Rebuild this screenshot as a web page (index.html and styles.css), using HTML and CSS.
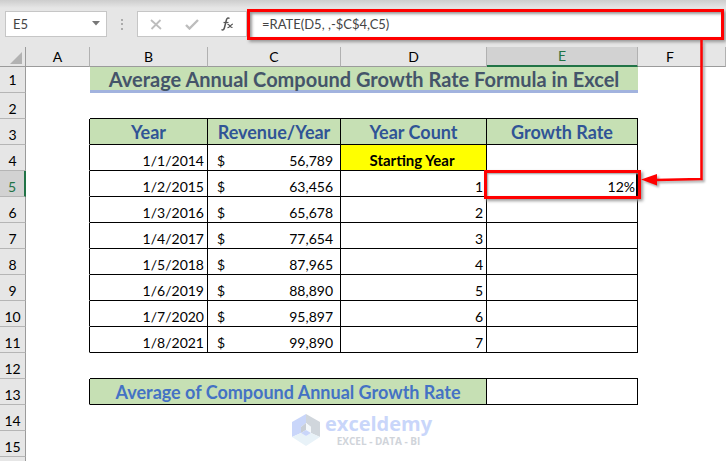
FILE: index.html
```html
<!DOCTYPE html>
<html lang="en">
<head>
<meta charset="utf-8">
<title>Average Annual Compound Growth Rate</title>
<link rel="stylesheet" href="styles.css">
</head>
<body>
<header class="bar">
  <div class="namebox">
    <input type="text" aria-label="Name box" value="E5">
    <button type="button" aria-label="Show names"><svg width="8" height="5" viewBox="0 0 8 5"><path d="M0 0H8L4 4.500Z" fill="#777"/></svg></button>
  </div>
  <svg class="grip" width="2" height="11" viewBox="0 0 2 11" fill="#ababab"><path d="M0 0h2v2H0zM0 4h2v2H0zM0 9h2v2H0z"/></svg>
  <div class="tools">
    <button type="button" aria-label="Cancel"><svg width="12" height="11" viewBox="0 0 12 11"><path d="M1 1L11 10M10.500 1L1.500 10" stroke="#bdbdbd" stroke-width="1.800" fill="none"/></svg></button>
    <button type="button" aria-label="Enter"><svg width="14" height="11" viewBox="0 0 14 11"><path d="M1 6L4.500 9.500L13 1" stroke="#bdbdbd" stroke-width="2.400" fill="none"/></svg></button>
    <button type="button" aria-label="Insert function"><svg width="13" height="14" viewBox="0 0 13 14" fill="none" stroke="#555"><path d="M8.500 1.500C7 .3 5.800 1.300 5.400 3L3.500 10.500C3.100 12.500 2 13.500.5 12.500" stroke-width="1.500"/><path d="M2.500 5.500H7.500" stroke-width="1.200"/><path d="M6.500 7.500C8.500 6.800 9 10.500 11.500 10.500M12 7C10 7 8.500 11 6.500 10.500" stroke-width="1.200"/></svg></button>
  </div>
  <input class="formula" type="text" aria-label="Formula bar" value="=RATE(D5, ,-$C$4,C5)">
</header>
<main class="sheet">
<table>
  <colgroup><col class="c-n"><col class="c-a"><col class="c-b"><col class="c-c"><col class="c-d"><col class="c-e"><col class="c-f"><col></colgroup>
  <thead>
    <tr><th class="corner"><svg width="12" height="12" viewBox="0 0 12 12"><path d="M12 0V12H0Z" fill="#b2b2b2"/></svg></th><th>A</th><th>B</th><th>C</th><th>D</th><th class="on">E</th><th>F</th><th></th></tr>
  </thead>
  <tbody>
    <tr class="first"><th>1</th><td></td><td class="title" colspan="4">Average Annual Compound Growth Rate Formula in Excel</td><td></td><td></td></tr>
    <tr><th>2</th><td></td><td class="top"></td><td class="top"></td><td class="top"></td><td class="top"></td><td></td><td></td></tr>
    <tr class="box heads"><th>3</th><td></td><td>Year</td><td>Revenue/Year</td><td>Year Count</td><td>Growth Rate</td><td></td><td></td></tr>
    <tr class="box"><th>4</th><td></td><td>1/1/2014</td><td><div class="money"><span>$</span><span>56,789</span></div></td><td class="start">Starting Year</td><td></td><td></td><td></td></tr>
    <tr class="box"><th class="on">5</th><td></td><td>1/2/2015</td><td><div class="money"><span>$</span><span>63,456</span></div></td><td>1</td><td class="picked">12%<span class="mark"></span></td><td></td><td></td></tr>
    <tr class="box"><th>6</th><td></td><td>1/3/2016</td><td><div class="money"><span>$</span><span>65,678</span></div></td><td>2</td><td></td><td></td><td></td></tr>
    <tr class="box"><th>7</th><td></td><td>1/4/2017</td><td><div class="money"><span>$</span><span>77,654</span></div></td><td>3</td><td></td><td></td><td></td></tr>
    <tr class="box"><th>8</th><td></td><td>1/5/2018</td><td><div class="money"><span>$</span><span>87,965</span></div></td><td>4</td><td></td><td></td><td></td></tr>
    <tr class="box"><th>9</th><td></td><td>1/6/2019</td><td><div class="money"><span>$</span><span>88,890</span></div></td><td>5</td><td></td><td></td><td></td></tr>
    <tr class="box"><th>10</th><td></td><td>1/7/2020</td><td><div class="money"><span>$</span><span>95,897</span></div></td><td>6</td><td></td><td></td><td></td></tr>
    <tr class="box"><th>11</th><td></td><td>1/8/2021</td><td><div class="money"><span>$</span><span>99,890</span></div></td><td>7</td><td></td><td></td><td></td></tr>
    <tr><th>12</th><td></td><td class="top"></td><td class="top"></td><td class="top"></td><td class="top"></td><td></td><td></td></tr>
    <tr class="box total"><th>13</th><td></td><td colspan="3">Average of Compound Annual Growth Rate</td><td></td><td></td><td></td></tr>
    <tr><th>14</th><td></td><td></td><td></td><td></td><td></td><td></td><td></td></tr>
    <tr><th>15</th><td></td><td></td><td></td><td></td><td></td><td></td><td></td></tr>
    <tr><th></th><td></td><td></td><td></td><td></td><td></td><td></td><td></td></tr>
  </tbody>
</table>
<svg class="arrow" width="70" height="156" viewBox="0 0 70 156"><path d="M61.500 0V139L16 140" fill="none" stroke="#f00" stroke-width="2.500"/><path d="M1 139.500L17 134V145.500Z" fill="#f00"/></svg>
<div class="watermark">
  <svg width="28" height="32" viewBox="0 0 28 32"><path d="M14 0L0 8V23L9 19V13L14 9Z" fill="#c9d6fa"/><path d="M14 0L28 8V23L19 19V13L14 9Z" fill="#d0d6dc"/><path d="M0 23L9 19L14 22L19 19L28 23L14 32Z" fill="#e8f2f8"/><path d="M9 13L14 9V16L9 19Z" fill="#c8ced6"/><path d="M14 9L19 13V19L14 16Z" fill="#f4f8fb"/><path d="M9 19L14 16L19 19L14 22Z" fill="#c9d6fa"/></svg>
  <div class="brand"><span class="name">exceldemy</span><span class="tag">EXCEL - DATA - BI</span></div>
</div>
</main>
</body>
</html>
```
FILE: styles.css
```css
* { box-sizing: border-box; }
body {
  margin: 0;
  height: 100vh;
  overflow: hidden;
  background: #fff;
  color: #000;
  font-family: Lato, "Open Sans", sans-serif;
  font-size: 14px;
}
button { border: 0; padding: 0; background: none; display: grid; place-items: center; }
input { border: 0; padding: 0; min-width: 0; background: #fff; font: inherit; font-size: 13px; color: #444; }

.bar {
  display: flex;
  align-items: center;
  height: 47px;
  padding: 1px 2px 0 5px;
  background: linear-gradient(#cdcdcd, #e6e6e6 8px);
}
.namebox {
  display: flex;
  width: 102px;
  height: 26px;
  border: 1px solid #c6c6c6;
  background: #fff;
}
.namebox input { flex: 1; padding-left: 7px; }
.namebox button { width: 20px; padding-bottom: 2px; }
.grip { margin: 0 14px; }
.tools {
  display: flex;
  justify-content: space-between;
  width: 110px;
  height: 26px;
  padding: 0 12px;
  border: 1px solid #c6c6c6;
  background: #fff;
}
.formula {
  flex: 1;
  height: 31px;
  padding-left: 12px;
  border: 3px solid #f00;
  box-shadow: 2px 2px 3px #999, inset 2px 2px 3px #999;
}

.sheet { position: relative; }
table { width: 100%; table-layout: fixed; border-collapse: separate; border-spacing: 0; }
.c-n { width: 26px; }
.c-a { width: 64px; }
.c-b { width: 118px; }
.c-c { width: 133px; }
.c-d { width: 146px; }
.c-e { width: 151px; }
.c-f { width: 65px; }
th {
  padding: 0;
  background: #e6e6e6;
  border: solid #9b9b9b;
  border-width: 0 1px 1px 0;
  font-weight: 400;
  line-height: 19px;
}
thead th { height: 20px; border-right-color: #b1b1b1; }
thead .corner { border-right-color: #9b9b9b; }
thead .on { color: #217346; background: #d2d2d2; border-bottom: 2px solid #217346; line-height: 18px; }
.corner svg { display: block; margin: 2px 3px 0 auto; }
tbody th { height: 26px; vertical-align: bottom; border-bottom-color: #b5b5b5; }
tbody .first th { vertical-align: middle; }
tbody th.on { color: #217346; background: #d2d2d2; border-right: 2px solid #217346; }
td {
  height: 26px;
  padding: 0 3px 0 0;
  vertical-align: bottom;
  text-align: right;
  line-height: 19px;
  white-space: nowrap;
  border: solid transparent;
  border-width: 0 1px 1px 0;
}
td.title {
  padding: 0;
  text-align: center;
  vertical-align: middle;
  background: #c6e0b4;
  border-width: 0 0 3px;
  border-color: #a2b3de;
  color: #44546a;
  font-size: 20px;
  font-weight: 700;
  line-height: 22px;
}
td.top { border-right-width: 0; border-bottom-color: #000; }
.box td:not(:nth-last-child(-n+2)) { border-right-color: #000; }
.box td:not(:nth-child(2)):not(:nth-last-child(-n+2)) { border-bottom-color: #000; }
.heads td, .total td { padding: 0; text-align: center; vertical-align: middle; font-size: 18px; font-weight: 700; line-height: 22px; }
.heads td { color: #305496; }
.heads td:nth-child(n+3):nth-child(-n+6), .total td:nth-child(3) { background: #c6e0b4; }
.total td { color: #4472c4; }
.money { display: flex; justify-content: space-between; padding: 0 4px 0 9px; }
td.start { background: #ff0; text-align: center; font-size: 15px; font-weight: 700; }
td.picked { position: relative; border-right: 2px solid #217346; padding-right: 1px; }
.mark {
  position: absolute;
  inset: -1px -5px -3px -3px;
  border: 3px solid #f00;
  box-shadow: 2px 2px 3px #999, inset 1px 1px 2px #999;
}
.arrow { position: absolute; left: 640px; top: -7px; filter: drop-shadow(2px 2px 1px #aaa); }
.watermark { position: absolute; left: 292px; top: 366px; display: flex; align-items: center; gap: 5px; }
.brand { display: flex; flex-direction: column; align-items: center; font-family: "Open Sans", sans-serif; font-weight: 700; }
.name { color: #c9d6fa; font-size: 20px; line-height: 22px; }
.tag { color: #d0d4da; font-size: 10px; line-height: 12px; }
```
